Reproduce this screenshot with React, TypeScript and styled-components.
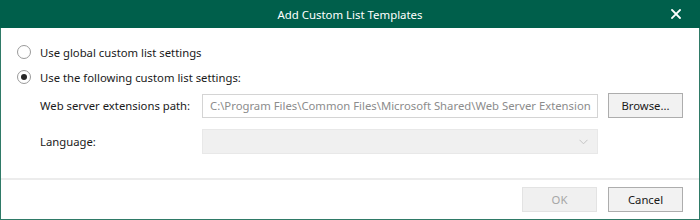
import styled, { createGlobalStyle } from "styled-components";

const GlobalStyle = createGlobalStyle`
  html, body {
    margin: 0;
    padding: 0;
    background: #ffffff;
  }
  body {
    font-family: "Noto Sans", "Open Sans", sans-serif;
    font-size: 11.3px;
    color: #1a1a1a;
  }
`;

const DialogWindow = styled.div`
  width: 700px;
  height: 220px;
  box-sizing: border-box;
  border: 1px solid #2f7a67;
  border-top: none;
  display: flex;
  flex-direction: column;
  background: #ffffff;
`;

const TitleBar = styled.div`
  height: 28px;
  margin: 0 -1px;
  background: #005f4b;
  color: #ffffff;
  display: flex;
  align-items: center;
  justify-content: center;
  position: relative;
  font-size: 11.4px;
`;

const CloseButton = styled.button`
  position: absolute;
  right: 17px;
  top: 7px;
  width: 14px;
  height: 14px;
  padding: 0;
  border: none;
  background: none;
  display: flex;
  align-items: center;
  justify-content: center;
  cursor: pointer;
`;

const Body = styled.div`
  flex: 1;
  padding: 14px 16px 0 16px;
  display: flex;
  flex-direction: column;
`;

const RadioRow = styled.label`
  height: 20px;
  display: flex;
  align-items: center;
  gap: 9px;
  margin-bottom: 5px;
  cursor: pointer;
`;

const RadioCircle = styled.span<{ checked?: boolean }>`
  width: 14px;
  height: 14px;
  box-sizing: border-box;
  border-radius: 50%;
  border: 1px solid #9a9a9a;
  background: #ffffff;
  display: flex;
  align-items: center;
  justify-content: center;

  &::after {
    content: "";
    width: 6px;
    height: 6px;
    border-radius: 50%;
    background: ${({ checked }) => (checked ? "#262626" : "transparent")};
  }
`;

const Fields = styled.div`
  margin-top: 1px;
  padding-left: 23px;
  display: flex;
  flex-direction: column;
  gap: 12px;
`;

const FieldRow = styled.div`
  display: grid;
  grid-template-columns: 152px 396px 75px;
  column-gap: 10px;
  align-items: center;
  height: 24px;
`;

const FieldLabel = styled.span`
  color: #1a1a1a;
`;

const PathInput = styled.div`
  height: 24px;
  box-sizing: border-box;
  border: 1px solid #d4d4d4;
  background: #ffffff;
  color: #8c8c8c;
  padding: 0 7px;
  display: flex;
  align-items: center;
  white-space: nowrap;
  overflow: hidden;
`;

const SelectBox = styled.div`
  height: 25px;
  box-sizing: border-box;
  border: 1px solid #e8e8e8;
  background: #f0f0f0;
  display: flex;
  align-items: center;
  justify-content: flex-end;
  padding-right: 9px;
`;

const Button = styled.button<{ disabled?: boolean }>`
  height: 25px;
  width: 75px;
  box-sizing: border-box;
  font-family: inherit;
  font-size: 11.3px;
  padding: 0;
  border: 1px solid ${({ disabled }) => (disabled ? "#e3e3e3" : "#adadad")};
  background: ${({ disabled }) => (disabled ? "#f0f0f0" : "#f2f2f2")};
  color: ${({ disabled }) => (disabled ? "#a6a6a6" : "#1a1a1a")};
  cursor: ${({ disabled }) => (disabled ? "default" : "pointer")};
`;

const Footer = styled.div`
  border-top: 2px solid #ececec;
  padding: 7px 16px 7px 16px;
  display: flex;
  justify-content: flex-end;
  gap: 11px;
`;

export default function App() {
  return (
    <>
      <GlobalStyle />
      <DialogWindow>
        <TitleBar>
          Add Custom List Templates
          <CloseButton aria-label="Close">
            <svg width="10" height="10" viewBox="0 0 10 10">
              <path
                d="M1 1 L9 9 M9 1 L1 9"
                stroke="#ffffff"
                strokeWidth="1.8"
                strokeLinecap="square"
              />
            </svg>
          </CloseButton>
        </TitleBar>
        <Body>
          <RadioRow>
            <RadioCircle />
            Use global custom list settings
          </RadioRow>
          <RadioRow>
            <RadioCircle checked />
            Use the following custom list settings:
          </RadioRow>
          <Fields>
            <FieldRow>
              <FieldLabel>Web server extensions path:</FieldLabel>
              <PathInput>
                C:\Program Files\Common Files\Microsoft Shared\Web Server Extension
              </PathInput>
              <Button>Browse...</Button>
            </FieldRow>
            <FieldRow>
              <FieldLabel>Language:</FieldLabel>
              <SelectBox>
                <svg width="9" height="6" viewBox="0 0 9 6">
                  <path d="M0.5 0.8 L4.5 4.8 L8.5 0.8" fill="none" stroke="#c4c4c4" strokeWidth="1" />
                </svg>
              </SelectBox>
            </FieldRow>
          </Fields>
        </Body>
        <Footer>
          <Button disabled>OK</Button>
          <Button>Cancel</Button>
        </Footer>
      </DialogWindow>
    </>
  );
}
